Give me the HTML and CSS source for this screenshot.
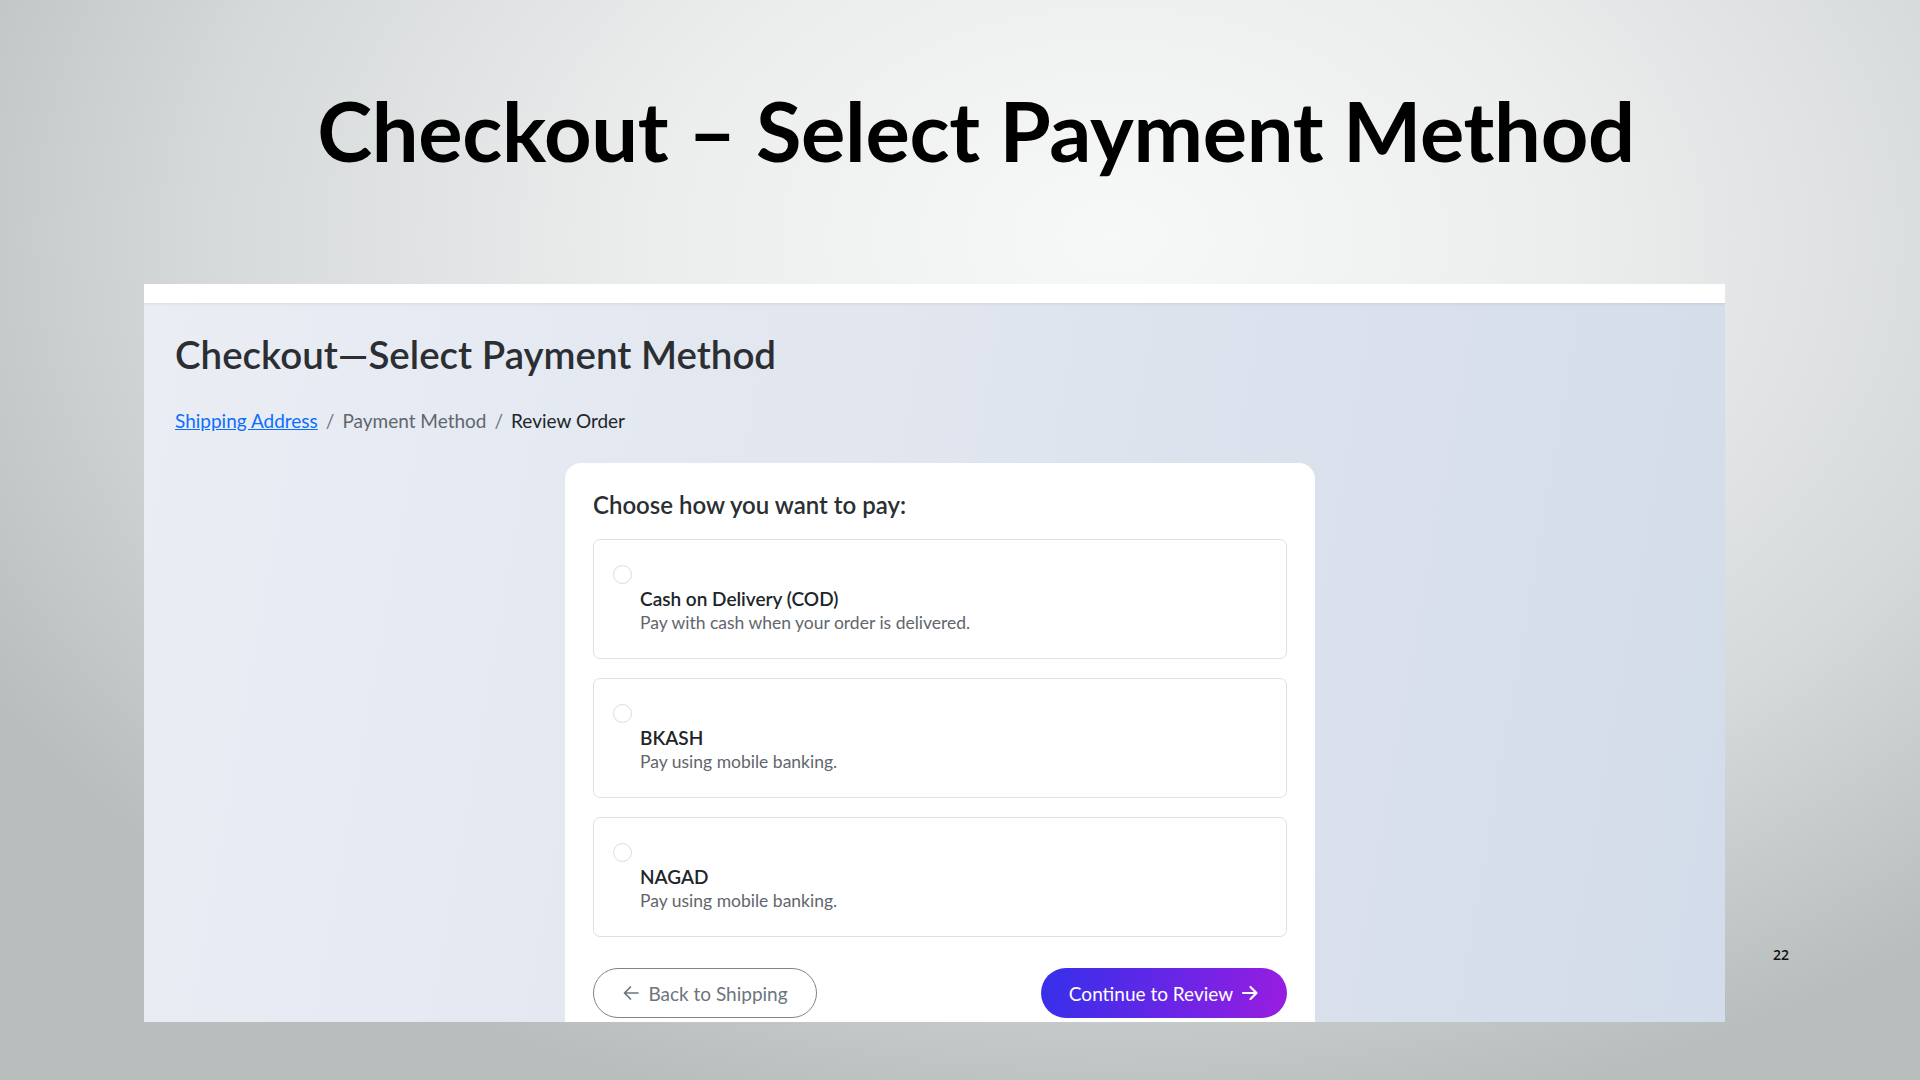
FILE: index.html
```html
<!DOCTYPE html>
<html lang="en">
<head>
<meta charset="utf-8">
<title>Checkout – Select Payment Method</title>
<link rel="stylesheet" href="styles.css">
</head>
<body>
<div class="slide">
  <h1 class="slide-title">Checkout – Select Payment Method</h1>
  <div class="shot">
    <div class="shot-topbar"></div>
    <div class="shot-page">
      <h2 class="page-title">Checkout—Select Payment Method</h2>
      <nav class="crumbs">
        <a href="#" class="crumb-link">Shipping Address</a>
        <span class="crumb-sep">/</span>
        <span class="crumb-muted">Payment Method</span>
        <span class="crumb-sep">/</span>
        <span class="crumb-current">Review Order</span>
      </nav>
      <div class="card">
        <h3 class="card-title">Choose how you want to pay:</h3>
        <div class="options">
          <label class="option">
            <span class="radio"></span>
            <span class="option-text">
              <span class="option-name">Cash on Delivery (COD)</span>
              <span class="option-desc">Pay with cash when your order is delivered.</span>
            </span>
          </label>
          <label class="option">
            <span class="radio"></span>
            <span class="option-text">
              <span class="option-name">BKASH</span>
              <span class="option-desc">Pay using mobile banking.</span>
            </span>
          </label>
          <label class="option">
            <span class="radio"></span>
            <span class="option-text">
              <span class="option-name">NAGAD</span>
              <span class="option-desc">Pay using mobile banking.</span>
            </span>
          </label>
        </div>
        <div class="actions">
          <button class="btn btn-back">
            <svg class="ico" viewBox="0 0 18 18" width="18" height="18"><path d="M16 9H2.5M8.5 3L2.5 9l6 6" fill="none" stroke="currentColor" stroke-width="1.7" stroke-linecap="round" stroke-linejoin="round"/></svg>
            Back to Shipping
          </button>
          <button class="btn btn-next">
            Continue to Review
            <svg class="ico" viewBox="0 0 18 18" width="18" height="18"><path d="M2 9h13.5M9.5 3l6 6-6 6" fill="none" stroke="currentColor" stroke-width="2.2" stroke-linecap="round" stroke-linejoin="round"/></svg>
          </button>
        </div>
      </div>
    </div>
  </div>
  <div class="slide-num">22</div>
</div>
</body>
</html>
```

FILE: styles.css
```css
* { box-sizing: border-box; }
html, body { margin: 0; padding: 0; }
body {
  width: 1920px;
  height: 1080px;
  overflow: hidden;
  font-family: Lato, "Open Sans", sans-serif;
}
.slide {
  position: relative;
  width: 1920px;
  height: 1080px;
  background:
    radial-gradient(ellipse 1300px 900px at 58% 22%, #f7f8f8 0%, #eceeee 35%, #d6d9da 70%, #b8bdbd 100%);
  padding-top: 80px;
}
.slide-title {
  margin: 0;
  height: 204px;
  padding-left: 32px;
  text-align: center;
  font-family: Lato, sans-serif;
  font-weight: 700;
  font-size: 83px;
  line-height: 100px;
  color: #000;
  letter-spacing: -0.3px;
}
.shot {
  margin-left: 144px;
  width: 1581px;
  height: 738px;
  overflow: hidden;
  display: flex;
  flex-direction: column;
}
.shot-topbar {
  height: 19px;
  background: #fff;
  box-shadow: 0 1px 3px rgba(0,0,0,0.08);
  position: relative;
  z-index: 1;
  flex: none;
}
.shot-page {
  flex: 1;
  background: linear-gradient(100deg, #eaedf4 0%, #e1e6ef 45%, #d3dcea 100%);
  padding: 28px 0 0 31px;
}
.page-title {
  margin: 0;
  font-family: Lato, sans-serif;
  font-weight: 600;
  font-size: 38.5px;
  line-height: 46px;
  color: #2b2f33;
}
.crumbs {
  margin-top: 32px;
  font-size: 19px;
  line-height: 24px;
  color: #6c757d;
  display: flex;
  gap: 8px;
}
.crumb-link { color: #0d6efd; text-decoration: underline; }
.crumb-muted { color: #5f666d; }
.crumb-current { color: #212529; }
.card {
  margin-top: 30px;
  margin-left: 390px;
  width: 750px;
  background: #fff;
  border-radius: 16px;
  padding: 28px 28px 40px;
}
.card-title {
  margin: 0;
  font-weight: 600;
  font-size: 24px;
  line-height: 28px;
  color: #2b2f33;
}
.options {
  margin-top: 20px;
  display: flex;
  flex-direction: column;
  gap: 19px;
}
.option {
  display: block;
  height: 120px;
  border: 1px solid #dde1e6;
  border-radius: 7px;
  padding: 25px 19px 0;
}
.radio {
  display: block;
  width: 19px;
  height: 19px;
  border: 1px solid #d9dde2;
  border-radius: 50%;
  background: #fff;
}
.option-text {
  display: flex;
  flex-direction: column;
  margin-left: 27px;
  margin-top: 3px;
}
.option-name {
  font-size: 19px;
  line-height: 24px;
  font-weight: 600;
  color: #212529;
}
.option-desc {
  font-size: 17.5px;
  line-height: 23px;
  color: #5f666d;
}
.actions {
  margin-top: 31px;
  display: flex;
  justify-content: space-between;
}
.btn {
  height: 50px;
  border-radius: 25px;
  font-family: Lato, sans-serif;
  font-size: 19px;
  display: inline-flex;
  align-items: center;
  justify-content: center;
  gap: 8px;
  cursor: pointer;
}
.btn-back {
  width: 224px;
  background: #fff;
  border: 1.5px solid #7d848b;
  color: #6c757d;
}
.btn-next {
  width: 246px;
  border: none;
  color: #fff;
  background: linear-gradient(100deg, #3530ea 0%, #6a25e6 55%, #9a1de0 100%);
}
.ico { flex: none; }
.slide-num {
  position: absolute;
  left: 1773px;
  top: 945px;
  font-family: "Open Sans", sans-serif;
  font-size: 14px;
  font-weight: 600;
  color: #111;
}
```
